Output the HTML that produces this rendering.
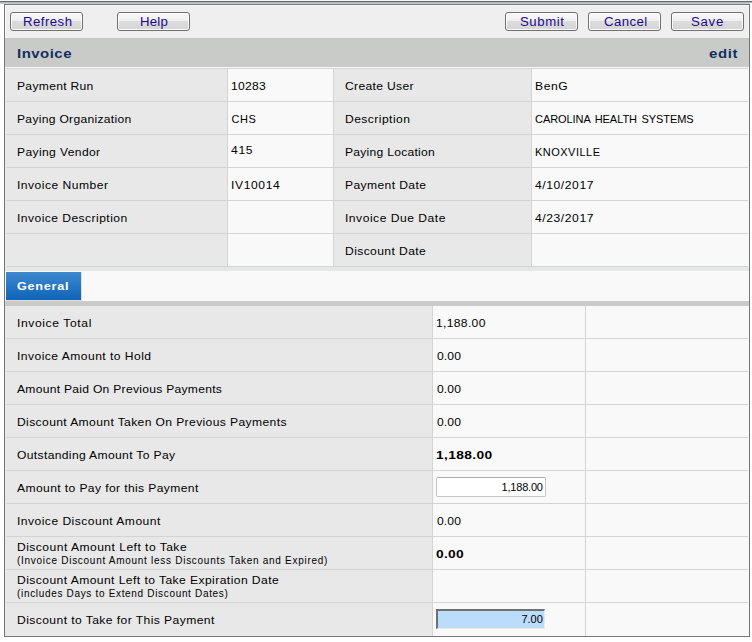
<!DOCTYPE html>
<html><head><meta charset="utf-8">
<style>
*{margin:0;padding:0;box-sizing:border-box}
html,body{width:752px;height:642px;overflow:hidden;background:#fff;font-family:"Liberation Sans",sans-serif;color:#111}
.a{position:absolute}
.t{position:absolute;white-space:pre;line-height:14px;color:#000;font-size:11px;transform:scaleX(1.1);transform-origin:0 0}
.bt{font-size:12px;color:#1c0890}
.hd{font-size:13px;font-weight:bold;color:#142f5e;transform:scaleX(1.15)}
.tab{font-weight:bold;color:#fff;transform:scaleX(1.15)}
.lbb{font-weight:bold;color:#000;transform:scaleX(1.25)}
.sm{font-size:10px;transform:none}
.inp{font-size:11px;color:#000;transform:none}
.btn{position:absolute;top:12px;width:73px;height:19px;border:1px solid #707070;border-radius:3px;
 background:linear-gradient(#fafafa 0,#efefef 45%,#dcdcdc 50%,#d5d5d5 100%);box-shadow:inset 0 0 0 1px #fdfdfd}
.hl{position:absolute;left:6px;width:742px;height:1px;background:#d4d4d4}
.vl{position:absolute;width:1px;background:#d4d4d4}
.lab{position:absolute;background:#e8e8e8}
.val{position:absolute;background:#f9f9f9}
</style></head><body>
<div class="a" style="left:0;top:0;width:752px;height:1px;background:#eef5fb"></div>
<div class="a" style="left:0;top:1px;width:752px;height:1px;background:#6b6b6b"></div>
<div class="a" style="left:0;top:2px;width:752px;height:1px;background:#b2b2b2"></div>
<div class="a" style="left:0;top:3px;width:750px;height:1px;background:#cdcdcd"></div>
<div class="a" style="left:4px;top:4px;width:746px;height:633px;border:1px solid #777;background:#efefef"></div>
<div class="a" style="left:5px;top:5px;width:744px;height:631px;border-top:1px solid #fafafa;border-right:1px solid #f6f6f6"></div>
<div class="a" style="left:5px;top:5px;width:1px;height:33px;background:#fafafa"></div>

<div class="btn" style="left:10px"></div>
<div class="btn" style="left:117px"></div>
<div class="btn" style="left:505px"></div>
<div class="btn" style="left:588px"></div>
<div class="btn" style="left:671px"></div>

<div class="a" style="left:5px;top:38px;width:744px;height:29px;background:#c9cbc9;border-top:1px solid #c4c6c4"></div>
<div class="a" style="left:5px;top:67px;width:744px;height:1px;background:#f8f8f8"></div>

<div class="lab" style="left:5px;top:68px;width:222px;height:198px"></div>
<div class="val" style="left:228px;top:68px;width:105px;height:198px"></div>
<div class="lab" style="left:334px;top:68px;width:197px;height:198px"></div>
<div class="val" style="left:532px;top:68px;width:216px;height:198px"></div>
<div class="hl" style="top:68px"></div>
<div class="hl" style="top:101px"></div>
<div class="hl" style="top:134px"></div>
<div class="hl" style="top:167px"></div>
<div class="hl" style="top:200px"></div>
<div class="hl" style="top:233px"></div>
<div class="hl" style="top:266px"></div>
<div class="vl" style="left:227px;top:68px;height:198px"></div>
<div class="vl" style="left:333px;top:68px;height:198px"></div>
<div class="vl" style="left:531px;top:68px;height:198px"></div>

<div class="a" style="left:5px;top:267px;width:744px;height:4px;background:#e6e8e8"></div>
<div class="a" style="left:5px;top:271px;width:744px;height:30px;background:#f9f9f9"></div>
<div class="a" style="left:6px;top:272px;width:76px;height:29px;background:#e2ddd8"></div>
<div class="a" style="left:6px;top:272px;width:75px;height:28px;background:linear-gradient(#3f8ad0,#0f63b6)"></div>
<div class="a" style="left:5px;top:301px;width:744px;height:5px;background:#c9cbc9"></div>

<div class="lab" style="left:5px;top:306px;width:427px;height:330px"></div>
<div class="val" style="left:433px;top:306px;width:152px;height:330px"></div>
<div class="val" style="left:586px;top:306px;width:162px;height:330px"></div>
<div class="hl" style="top:338px"></div>
<div class="hl" style="top:371px"></div>
<div class="hl" style="top:404px"></div>
<div class="hl" style="top:437px"></div>
<div class="hl" style="top:470px"></div>
<div class="hl" style="top:503px"></div>
<div class="hl" style="top:536px"></div>
<div class="hl" style="top:569px"></div>
<div class="hl" style="top:602px"></div>
<div class="vl" style="left:432px;top:306px;height:330px"></div>
<div class="vl" style="left:585px;top:306px;height:330px"></div>

<div class="a" style="left:436px;top:477px;width:110px;height:20px;border:1px solid #c6c6c6;border-top-color:#a8a8a8;border-radius:2px;background:#fff"></div>
<div class="a" style="left:436px;top:609px;width:109px;height:20px;border-top:2px solid #707070;border-left:2px solid #707070;border-right:1px solid #eaeaea;border-bottom:1px solid #eaeaea;background:#bcdcfb"></div>
<div class="t bt" style="left:22.66px;top:15.00px;letter-spacing:0.420px;">Refresh</div>
<div class="t bt" style="left:139.54px;top:15.00px;letter-spacing:0.213px;">Help</div>
<div class="t bt" style="left:519.66px;top:15.00px;letter-spacing:0.512px;">Submit</div>
<div class="t bt" style="left:603.58px;top:15.00px;letter-spacing:0.376px;">Cancel</div>
<div class="t bt" style="left:690.70px;top:15.00px;letter-spacing:0.667px;">Save</div>
<div class="t hd" style="left:16.62px;top:47.00px;letter-spacing:0.430px;">Invoice</div>
<div class="t hd" style="left:708.58px;top:47.00px;letter-spacing:0.573px;">edit</div>
<div class="t tab" style="left:16.70px;top:279.00px;letter-spacing:0.633px;">General</div>
<div class="t lb" style="left:16.70px;top:79.00px;letter-spacing:0.275px;">Payment Run</div>
<div class="t lb" style="left:16.70px;top:112.00px;letter-spacing:0.263px;">Paying Organization</div>
<div class="t lb" style="left:16.70px;top:145.00px;letter-spacing:0.336px;">Paying Vendor</div>
<div class="t lb" style="left:16.70px;top:178.00px;letter-spacing:0.442px;">Invoice Number</div>
<div class="t lb" style="left:16.70px;top:211.00px;letter-spacing:0.403px;">Invoice Description</div>
<div class="t lb" style="left:230.58px;top:79.00px;letter-spacing:0.270px;">10283</div>
<div class="t lb" style="left:231.38px;top:112.00px;letter-spacing:0.640px;transform:none">CHS</div>
<div class="t lb" style="left:231.38px;top:143.00px;letter-spacing:0.640px;">415</div>
<div class="t lb" style="left:230.58px;top:178.00px;letter-spacing:0.547px;">IV10014</div>
<div class="t lb" style="left:345.30px;top:79.00px;letter-spacing:0.306px;">Create User</div>
<div class="t lb" style="left:344.70px;top:112.00px;letter-spacing:0.398px;">Description</div>
<div class="t lb" style="left:344.70px;top:145.00px;letter-spacing:0.234px;">Paying Location</div>
<div class="t lb" style="left:344.70px;top:178.00px;letter-spacing:0.351px;">Payment Date</div>
<div class="t lb" style="left:344.70px;top:211.00px;letter-spacing:0.460px;">Invoice Due Date</div>
<div class="t lb" style="left:344.70px;top:244.00px;letter-spacing:0.362px;">Discount Date</div>
<div class="t lb" style="left:534.70px;top:79.00px;letter-spacing:0.547px;">BenG</div>
<div class="t lb" style="left:535.00px;top:112.00px;letter-spacing:-0.055px;transform:none;word-spacing:1.5px">CAROLINA HEALTH SYSTEMS</div>
<div class="t lb" style="left:535.00px;top:145.00px;letter-spacing:0.485px;transform:none;word-spacing:1.5px">KNOXVILLE</div>
<div class="t lb" style="left:535.30px;top:178.00px;letter-spacing:0.523px;">4/10/2017</div>
<div class="t lb" style="left:535.30px;top:211.00px;letter-spacing:0.523px;">4/23/2017</div>
<div class="t lb" style="left:16.70px;top:316.00px;letter-spacing:0.552px;">Invoice Total</div>
<div class="t lb" style="left:16.70px;top:349.00px;letter-spacing:0.417px;">Invoice Amount to Hold</div>
<div class="t lb" style="left:17.30px;top:382.00px;letter-spacing:0.248px;">Amount Paid On Previous Payments</div>
<div class="t lb" style="left:16.70px;top:415.00px;letter-spacing:0.342px;">Discount Amount Taken On Previous Payments</div>
<div class="t lb" style="left:17.30px;top:448.00px;letter-spacing:0.315px;">Outstanding Amount To Pay</div>
<div class="t lb" style="left:17.30px;top:481.00px;letter-spacing:0.351px;">Amount to Pay for this Payment</div>
<div class="t lb" style="left:16.70px;top:514.00px;letter-spacing:0.420px;">Invoice Discount Amount</div>
<div class="t lb" style="left:16.70px;top:540.00px;letter-spacing:0.419px;">Discount Amount Left to Take</div>
<div class="t sm" style="left:17.00px;top:554.00px;letter-spacing:0.718px;">(Invoice Discount Amount less Discounts Taken and Expired)</div>
<div class="t lb" style="left:16.70px;top:573.00px;letter-spacing:0.390px;">Discount Amount Left to Take Expiration Date</div>
<div class="t sm" style="left:17.00px;top:587.00px;letter-spacing:0.675px;">(includes Days to Extend Discount Dates)</div>
<div class="t lb" style="left:16.70px;top:613.00px;letter-spacing:0.384px;">Discount to Take for This Payment</div>
<div class="t lb" style="left:435.70px;top:316.00px;letter-spacing:0.300px;">1,188.00</div>
<div class="t lb" style="left:436.50px;top:349.00px;letter-spacing:0.093px;">0.00</div>
<div class="t lb" style="left:436.50px;top:382.00px;letter-spacing:0.093px;">0.00</div>
<div class="t lb" style="left:436.50px;top:415.00px;letter-spacing:0.093px;">0.00</div>
<div class="t lbb" style="left:435.70px;top:448.00px;letter-spacing:0.309px;">1,188.00</div>
<div class="t lb" style="left:436.50px;top:514.00px;letter-spacing:0.093px;">0.00</div>
<div class="t lbb" style="left:436.42px;top:547.00px;letter-spacing:0.260px;">0.00</div>
<div class="t inp" style="left:501.54px;top:480.00px;letter-spacing:-0.194px;">1,188.00</div>
<div class="t inp" style="left:521.54px;top:612.00px;letter-spacing:-0.060px;">7.00</div>
</body></html>
